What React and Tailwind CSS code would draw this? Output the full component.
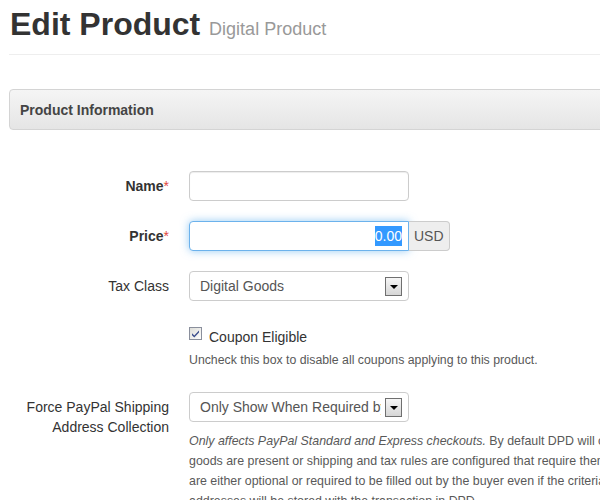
import { useState } from "react";

function Label({ children, required }) {
  return (
    <div className="w-[160px] shrink-0 pt-[5px] text-right">
      {children}
      {required ? <span className="text-[#e0473e]">*</span> : null}
    </div>
  );
}

function SelectBox({ value }) {
  return (
    <div className="relative h-[30px] w-[220px] rounded-[4px] border border-[#ccc] bg-white text-[#555]">
      <div className="mr-[27px] overflow-hidden whitespace-nowrap pl-[10px] pt-[4px]">{value}</div>
      <div className="absolute right-[6px] top-[5px] flex h-[19px] w-[17px] items-center justify-center border border-[#6f6f6f] bg-gradient-to-b from-[#f6f6f6] to-[#d6d6d6]">
        <div className="h-0 w-0 border-l-[4px] border-r-[4px] border-t-[4px] border-l-transparent border-r-transparent border-t-black" />
      </div>
    </div>
  );
}

function CheckBox({ checked }) {
  return (
    <svg width="13" height="13" viewBox="0 0 13 13" className="absolute left-0 top-[6px]">
      <defs>
        <linearGradient id="cb" x1="0" y1="0" x2="1" y2="1">
          <stop offset="0" stopColor="#dcdcd7" />
          <stop offset="1" stopColor="#ffffff" />
        </linearGradient>
      </defs>
      <rect x="0.5" y="0.5" width="12" height="12" fill="url(#cb)" stroke="#8a8f9c" />
      {checked ? <path d="M3 6.2 L5.3 8.6 L10 3.6 L10 5.6 L5.3 10.6 L3 8.2 Z" fill="#3b4d8c" /> : null}
    </svg>
  );
}

export default function App() {
  const [coupon, setCoupon] = useState(true);

  return (
    <div className="h-[500px] w-[600px] overflow-hidden bg-white font-['Liberation_Sans',Arial,sans-serif] text-[14px] leading-[20px] text-[#333]">
      <div className="w-[820px] pl-[9px]">
        <div className="border-b border-[#eee] pb-[10px] pt-[4px]">
          <h1 className="h-[40px] pl-[1px] text-[32px] font-bold leading-[40px]">
            Edit Product <small className="text-[18px] font-normal leading-none text-[#999]">Digital Product</small>
          </h1>
        </div>

        <div className="mt-[34px] flex h-[41px] items-center rounded-[4px] border border-[#d4d4d4] bg-gradient-to-b from-[#f5f5f5] to-[#e5e5e5] px-[10px] font-bold text-[#444]">
          Product Information
        </div>

        <form className="mt-[41px]">
          <div className="mb-[20px] flex">
            <Label required>
              <b>Name</b>
            </Label>
            <div className="ml-[20px]">
              <div className="h-[30px] w-[220px] rounded-[4px] border border-[#ccc] bg-white shadow-[inset_0_1px_1px_rgba(0,0,0,0.075)]" />
            </div>
          </div>

          <div className="mb-[20px] flex">
            <Label required>
              <b>Price</b>
            </Label>
            <div className="ml-[20px] flex">
              <div className="flex h-[30px] w-[220px] items-center justify-end rounded-l-[4px] border border-[#6cb2ec] bg-white pr-[6px] shadow-[0_0_8px_rgba(82,168,236,0.6)]">
                <span className="bg-[#3399ff] leading-[20px] text-white">0.00</span>
              </div>
              <div className="flex h-[30px] items-center rounded-r-[4px] border border-l-0 border-[#ccc] bg-[#eee] px-[5px] text-[#555]">
                USD
              </div>
            </div>
          </div>

          <div className="mb-[20px] flex">
            <Label>Tax Class</Label>
            <div className="ml-[20px]">
              <SelectBox value="Digital Goods" />
            </div>
          </div>

          <div className="mb-[22px] flex">
            <div className="w-[160px] shrink-0" />
            <div className="ml-[20px]">
              <label className="relative block cursor-pointer pl-[20px] pt-[6px] text-[#333]" onClick={() => setCoupon(!coupon)}>
                <CheckBox checked={coupon} />
                Coupon Eligible
              </label>
              <p className="mt-[3px] text-[12.3px] leading-[20px] text-[#595959]">
                Uncheck this box to disable all coupons applying to this product.
              </p>
            </div>
          </div>

          <div className="flex">
            <Label>
              Force PayPal Shipping
              <br />
              Address Collection
            </Label>
            <div className="ml-[20px]">
              <SelectBox value="Only Show When Required by Cart Contents" />
              <p className="mt-[9px] whitespace-nowrap text-[12.4px] leading-[20px] text-[#595959]">
                <em>Only affects PayPal Standard and Express checkouts.</em> By default DPD will only show shipping address fields if tangible
                <br />
                goods are present or shipping and tax rules are configured that require them. You can make these fields
                <br />
                are either optional or required to be filled out by the buyer even if the criteria for requiring them is not met.
                <br />
                addresses will be stored with the transaction in DPD.
              </p>
            </div>
          </div>
        </form>
      </div>
    </div>
  );
}
